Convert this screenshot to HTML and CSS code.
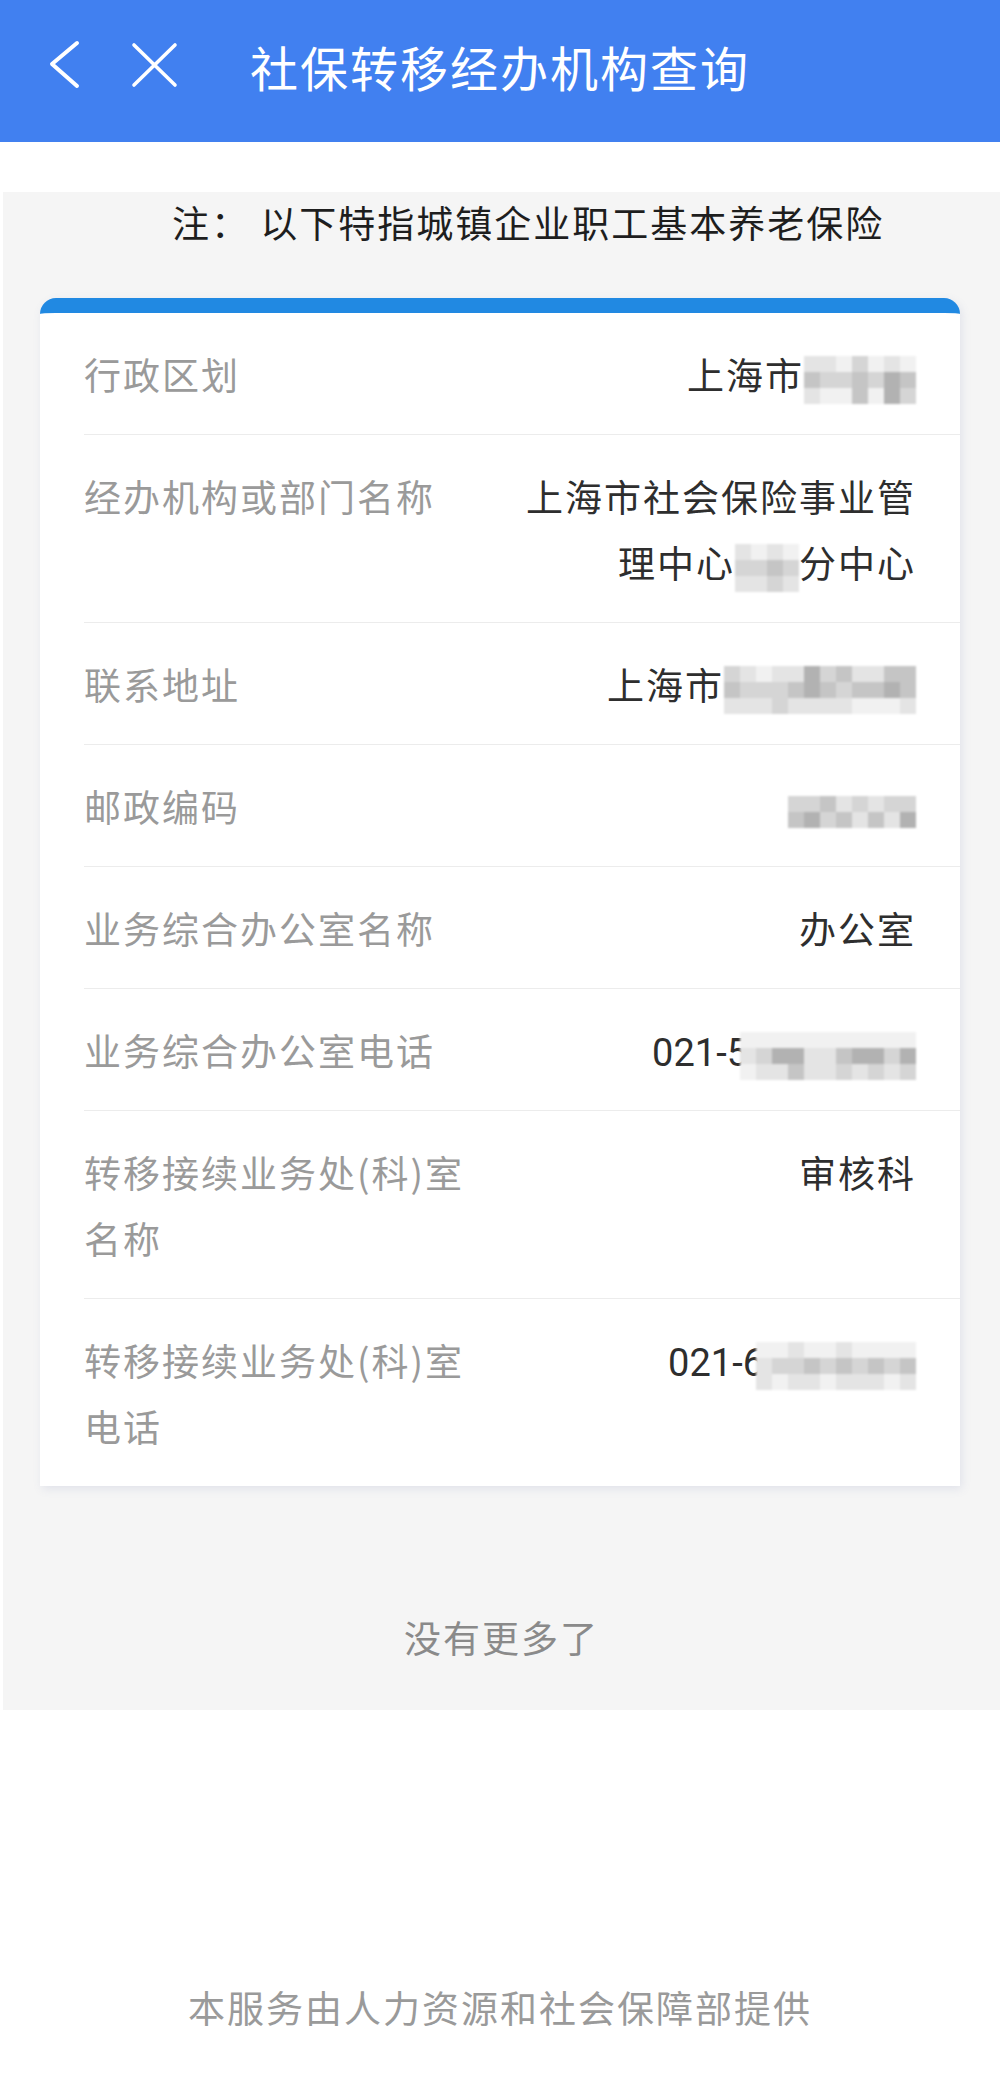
FILE: index.html
```html
<!DOCTYPE html>
<html lang="zh-CN">
<head>
<meta charset="utf-8">
<title>社保转移经办机构查询</title>
<link rel="stylesheet" href="styles.css">
</head>
<body>
<header class="topbar">
  <svg class="icon-back" width="40" height="56" viewBox="0 0 40 56" aria-hidden="true">
    <polyline points="33,7 8,28 33,50" fill="none" stroke="#fff" stroke-width="4" stroke-linecap="round" stroke-linejoin="round"/>
  </svg>
  <svg class="icon-close" width="60" height="56" viewBox="0 0 60 56" aria-hidden="true">
    <path d="M10 9 L51 49 M51 9 L10 49" fill="none" stroke="#fff" stroke-width="3.6" stroke-linecap="round"/>
  </svg>
  <h1 class="title">社保转移经办机构查询</h1>
</header>

<main class="content">
  <p class="note">注： 以下特指城镇企业职工基本养老保险</p>

  <section class="card">
    <div class="row">
      <div class="label">行政区划</div>
      <div class="value">上海市<span class="mosaic r3"><i class="g2"></i><i class="g4"></i><i class="g2"></i><i class="g2"></i><i class="g3"></i><i class="g1"></i><i class="g1"></i><i class="g3"></i><i class="g1"></i><i class="g3"></i><i class="g4"></i><i class="g4"></i><i class="g1"></i><i class="g3"></i><i class="g1"></i><i class="g2"></i><i class="g5"></i><i class="g5"></i><i class="g1"></i><i class="g4"></i><i class="g3"></i></span></div>
    </div>
    <div class="row">
      <div class="label">经办机构或部门名称</div>
      <div class="value"><span class="line">上海市社会保险事业管</span><span class="line">理中心<span class="mosaic r3"><i class="g2"></i><i class="g3"></i><i class="g2"></i><i class="g1"></i><i class="g3"></i><i class="g2"></i><i class="g2"></i><i class="g4"></i><i class="g3"></i><i class="g1"></i><i class="g3"></i><i class="g2"></i></span>分中心</span></div>
    </div>
    <div class="row">
      <div class="label">联系地址</div>
      <div class="value">上海市<span class="mosaic r3"><i class="g3"></i><i class="g4"></i><i class="g2"></i><i class="g2"></i><i class="g3"></i><i class="g2"></i><i class="g1"></i><i class="g3"></i><i class="g2"></i><i class="g2"></i><i class="g3"></i><i class="g3"></i><i class="g2"></i><i class="g4"></i><i class="g2"></i><i class="g5"></i><i class="g5"></i><i class="g2"></i><i class="g3"></i><i class="g4"></i><i class="g2"></i><i class="g4"></i><i class="g3"></i><i class="g2"></i><i class="g2"></i><i class="g4"></i><i class="g1"></i><i class="g2"></i><i class="g4"></i><i class="g1"></i><i class="g4"></i><i class="g5"></i><i class="g1"></i><i class="g4"></i><i class="g4"></i><i class="g2"></i></span></div>
    </div>
    <div class="row">
      <div class="label">邮政编码</div>
      <div class="value"><span class="mosaic r2"><i class="g3"></i><i class="g4"></i><i class="g3"></i><i class="g5"></i><i class="g4"></i><i class="g3"></i><i class="g2"></i><i class="g4"></i><i class="g3"></i><i class="g2"></i><i class="g2"></i><i class="g4"></i><i class="g3"></i><i class="g2"></i><i class="g3"></i><i class="g5"></i></span></div>
    </div>
    <div class="row">
      <div class="label">业务综合办公室名称</div>
      <div class="value">办公室</div>
    </div>
    <div class="row">
      <div class="label">业务综合办公室电话</div>
      <div class="value"><span class="num">021-5</span><span class="mosaic r3 overlap"><i class="g1"></i><i class="g2"></i><i class="g1"></i><i class="g1"></i><i class="g3"></i><i class="g2"></i><i class="g1"></i><i class="g5"></i><i class="g2"></i><i class="g1"></i><i class="g5"></i><i class="g4"></i><i class="g1"></i><i class="g2"></i><i class="g2"></i><i class="g1"></i><i class="g2"></i><i class="g2"></i><i class="g1"></i><i class="g4"></i><i class="g3"></i><i class="g1"></i><i class="g5"></i><i class="g2"></i><i class="g1"></i><i class="g5"></i><i class="g3"></i><i class="g1"></i><i class="g3"></i><i class="g2"></i><i class="g1"></i><i class="g5"></i><i class="g3"></i></span></div>
    </div>
    <div class="row">
      <div class="label">转移接续业务处(科)室名称</div>
      <div class="value">审核科</div>
    </div>
    <div class="row">
      <div class="label">转移接续业务处(科)室电话</div>
      <div class="value"><span class="num">021-6</span><span class="mosaic r3 overlap"><i class="g1"></i><i class="g2"></i><i class="g2"></i><i class="g1"></i><i class="g3"></i><i class="g1"></i><i class="g2"></i><i class="g3"></i><i class="g2"></i><i class="g1"></i><i class="g4"></i><i class="g2"></i><i class="g1"></i><i class="g3"></i><i class="g1"></i><i class="g2"></i><i class="g4"></i><i class="g2"></i><i class="g1"></i><i class="g3"></i><i class="g2"></i><i class="g1"></i><i class="g4"></i><i class="g2"></i><i class="g1"></i><i class="g3"></i><i class="g1"></i><i class="g1"></i><i class="g4"></i><i class="g2"></i></span></div>
    </div>
  </section>

  <p class="nomore">没有更多了</p>
</main>

<footer class="footer">本服务由人力资源和社会保障部提供</footer>
</body>
</html>
```

FILE: styles.css
```css
* {
  box-sizing: border-box;
}

body {
  margin: 0;
  background: #ffffff;
  font-family: "Noto Sans CJK SC", "Noto Sans", sans-serif;
  color: #333333;
}

.topbar {
  height: 142px;
  background: #4180f0;
  display: flex;
  align-items: center;
  padding: 0 0 14px 44px;
}

.icon-back,
.icon-close {
  flex: none;
  display: block;
}

.icon-close {
  margin-left: 40px;
}

.title {
  margin: 4px 0 0 66px;
  font-size: 48px;
  font-weight: 400;
  letter-spacing: 2px;
  color: #ffffff;
  line-height: 1;
}

.content {
  margin: 50px 0 0 3px;
  background: #f5f5f5;
  padding: 0 0 40px;
}

.note {
  margin: 0;
  padding-left: 169px;
  font-size: 37px;
  letter-spacing: 2px;
  line-height: 60px;
  color: #1e1e1e;
}

.card {
  margin: 46px 40px 0 37px;
  background: #ffffff;
  border-top: 15px solid #2189e2;
  border-radius: 16px 16px 0 0;
  box-shadow: 2px 3px 10px rgba(90, 110, 170, 0.13);
}

.row {
  display: flex;
  margin-left: 44px;
  padding: 28px 44px 27px 0;
  border-bottom: 1px solid #ececec;
  font-size: 37px;
  letter-spacing: 2px;
  line-height: 66px;
}

.row:last-child {
  border-bottom: none;
}

.label {
  flex: none;
  width: 400px;
  color: #9a9a9a;
}

.value {
  flex: 1;
  margin-left: 20px;
  text-align: right;
  color: #2e2e2e;
}

.line {
  display: block;
}

.num {
  font-family: Roboto, "Noto Sans CJK SC", sans-serif;
  font-size: 38px;
  line-height: 40px;
  letter-spacing: 0;
}

.mosaic {
  display: inline-grid;
  grid-auto-flow: column;
  grid-auto-columns: 16px;
  vertical-align: middle;
  filter: blur(1px);
  letter-spacing: 0;
}

.mosaic.overlap {
  margin-left: -8px;
}

.mosaic.r3 {
  grid-template-rows: repeat(3, 16px);
}

.mosaic.r2 {
  grid-template-rows: repeat(2, 16px);
}

.mosaic i {
  display: block;
}

.g1 { background: #f1f1f1; }
.g2 { background: #e4e4e4; }
.g3 { background: #d5d5d5; }
.g4 { background: #c5c5c5; }
.g5 { background: #b2b2b2; }

.nomore {
  margin: 118px 0 0;
  text-align: center;
  font-size: 37px;
  letter-spacing: 2px;
  line-height: 66px;
  color: #8a8a8a;
}

.footer {
  margin-top: 264px;
  text-align: center;
  font-size: 37px;
  letter-spacing: 2px;
  line-height: 66px;
  color: #9a9a9a;
}
```
